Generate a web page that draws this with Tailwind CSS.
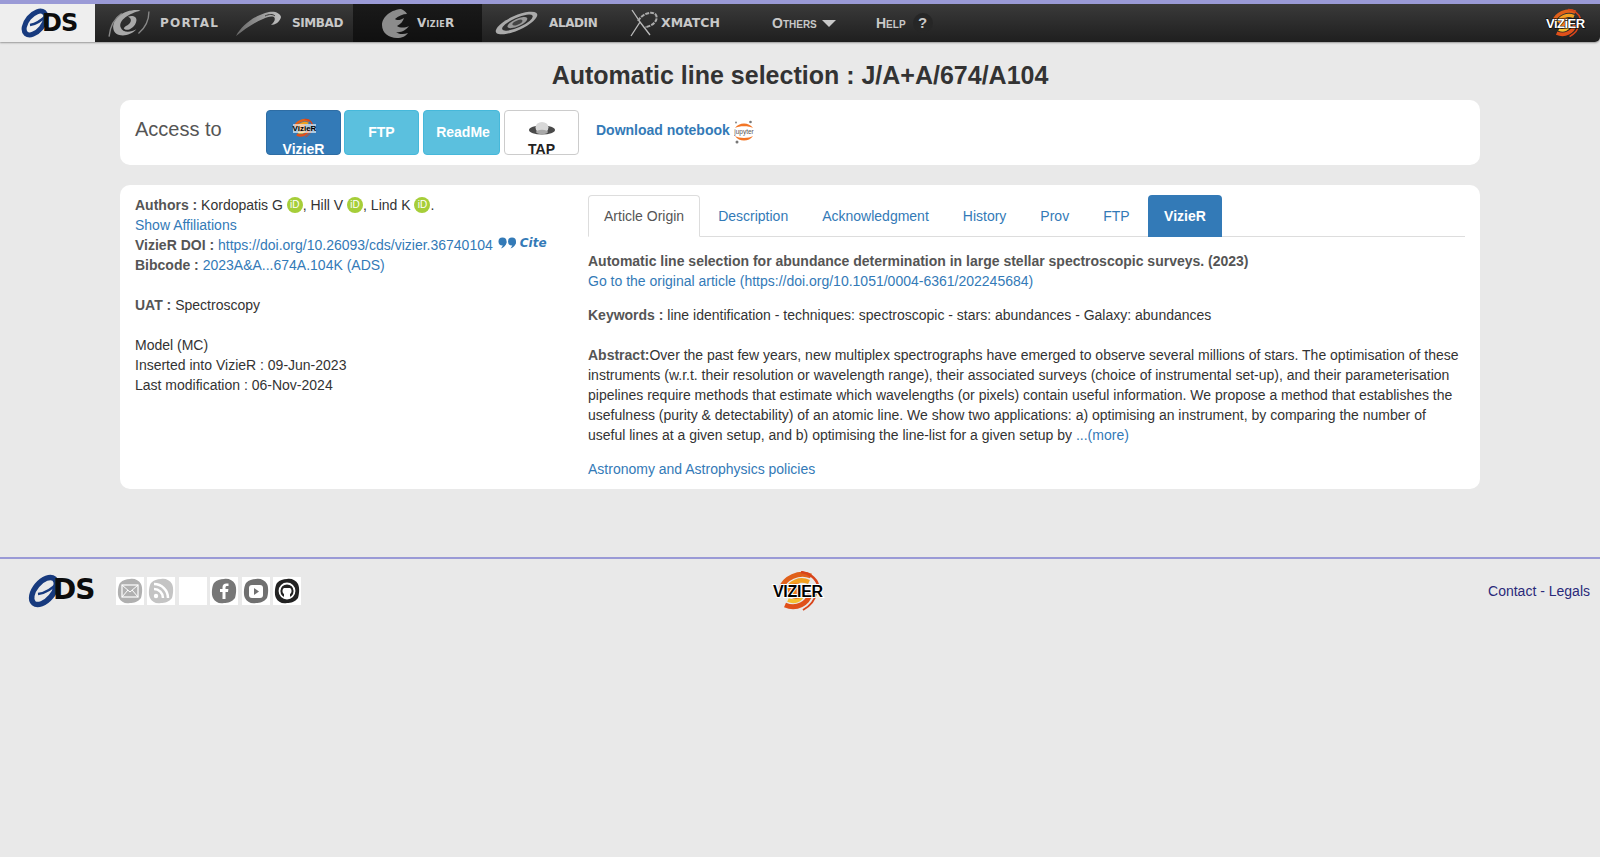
<!DOCTYPE html>
<html lang="en">
<head>
<meta charset="utf-8">
<title>J/A+A/674/A104</title>
<script src="https://cdn.jsdelivr.net/npm/@tailwindcss/browser@4"></script>
</head>
<body class="bg-[#e9e9e9] font-['Liberation_Sans',sans-serif] text-[14px] leading-[20px] text-[#333] min-h-[857px]">
<svg width="0" height="0" class="absolute">
  <defs>
    <symbol id="flame" viewBox="0 0 50 40">
      <path d="M8 18C11 7 26 0 38 5" fill="none" stroke="#e0601a" stroke-width="5"/>
      <path d="M14 19C17 11 27 7 36 11" fill="none" stroke="#f2a020" stroke-width="4.500"/>
      <path d="M28 1C36 2 43 7 45 14" fill="none" stroke="#d8441a" stroke-width="2.500"/>
      <path d="M37 23C35 32 24 39 12 34" fill="none" stroke="#e0501a" stroke-width="5"/>
      <path d="M30 23C28 29 22 32 15 29" fill="none" stroke="#f5c030" stroke-width="4"/>
      <path d="M43 22C42 30 37 35 30 39" fill="none" stroke="#d8441a" stroke-width="2"/>
      <circle cx="23" cy="20" r="8" fill="#ee7a1c"/>
    </symbol>
    <symbol id="blob" viewBox="0 0 26 26">
      <path d="M13 1C17 0 22 2 24 6C26 10 25 17 24 20C21 24 17 25 13 25C8 26 4 24 2 20C0 16 1 8 3 5C6 2 9 1 13 1Z"/>
    </symbol>
  </defs>
</svg>

<nav class="h-[42px] border-t-4 border-[#9a9ad6] bg-gradient-to-b from-[#3a3a3a] to-[#1f1f1f] rounded-br-[5px] shadow-[0_1px_2px_rgba(0,0,0,0.35)] flex items-stretch text-[#c8c8c8]">
  <a class="w-[95px] bg-[#eeeeee] flex items-center pl-[20px] shrink-0">
    <span class="relative block w-[58px] h-[30px]">
      <svg class="absolute left-0 top-0" width="40" height="30" viewBox="0 0 40 30"><ellipse cx="15" cy="15" rx="14" ry="8" transform="rotate(-50 15 15)" fill="none" stroke="#173a7e" stroke-width="5"/><path d="M10 17C17 16 22 12 27 7" fill="none" stroke="#173a7e" stroke-width="2.500"/></svg>
      <span class="absolute left-[22px] top-[3px] text-[24px] leading-[24px] font-bold text-[#0c0c0c] tracking-[-1px] font-['DejaVu_Sans',sans-serif]">DS</span>
    </span>
  </a>
  <a class="w-[258px] shrink-0 flex items-center pl-[13px]">
    <svg width="42" height="32" viewBox="0 0 40 30"><g fill="#a8a8a8"><path d="M31 3C17 1 4 10 5 20C6 29 20 29 27 21C22 24 14 25 12 19C10 12 20 6 31 3Z"/><path d="M15 20C18 24 26 19 27 13C28 9 23 7 19 9C22 10 23 13 20 16C18 18 16 18 15 20Z"/></g><path d="M1 28C2 18 7 10 13 6M39 4C39 14 35 20 29 25" fill="none" stroke="#888" stroke-width="1.300"/></svg>
    <span class="ml-[10px] w-[58px] text-[12px] font-bold tracking-[1.2px] font-['DejaVu_Sans',sans-serif]">PORTAL</span>
    <svg class="ml-[17px]" width="47" height="28" viewBox="0 0 47 28"><defs><linearGradient id="cm" x1="0" x2="1"><stop offset="0" stop-color="#666"/><stop offset="1" stop-color="#c0c0c0"/></linearGradient></defs><path d="M1 27C7 16 20 6 34 3C40 2 45 4 46 8C45 13 40 16 36 16C39 13 41 10 39 8C36 7 32 8 28 10C18 14 9 21 1 27Z" fill="url(#cm)"/><path d="M30 7C34 5 38 5 40 7" fill="none" stroke="#333" stroke-width="1"/></svg>
    <span class="ml-[10px] text-[12px] font-bold tracking-[-0.4px] font-['DejaVu_Sans',sans-serif]">SIMBAD</span>
  </a>
  <a class="w-[129px] shrink-0 bg-gradient-to-b from-[#1a1a1a] to-[#101010] flex items-center pl-[28px]">
    <svg width="29" height="32" viewBox="0 0 29 32"><path d="M22 2C10 2 1 10 1 18C1 26 8 31 16 31C21 31 25 29 27 26C22 28 17 27 15 25C20 26 25 23 28 19C24 21 19 21 16 19C20 17 22 14 23 11C20 13 16 14 14 12C17 9 22 7 26 7C25 5 23 3 20 2Z" fill="#8c8c8c"/></svg>
    <span class="ml-[7px] text-[12px] font-bold tracking-[0.3px] font-['DejaVu_Sans',sans-serif] [font-variant:small-caps]">VizieR</span>
  </a>
  <a class="flex items-center pl-[12px] shrink-0 w-[148px]">
    <svg width="45" height="26" viewBox="0 0 46 26"><g transform="rotate(-24 23 13)"><ellipse cx="23" cy="13" rx="23" ry="7.500" fill="#aaa"/><ellipse cx="24" cy="13" rx="17" ry="5" fill="#303030"/><ellipse cx="24" cy="13" rx="11" ry="3.800" fill="#999"/><ellipse cx="24" cy="13" rx="5.500" ry="2" fill="#444"/></g></svg>
    <span class="ml-[10px] text-[12px] font-bold tracking-[-0.4px] font-['DejaVu_Sans',sans-serif]">ALADIN</span>
  </a>
  <a class="flex items-center shrink-0 w-[142px]">
    <svg width="28" height="28" viewBox="0 0 28 28"><path d="M2 1L10 13L1 27M10 13L20 26" fill="none" stroke="#bbb" stroke-width="1.300"/><path d="M8 12C12 5 22 1 26 6C29 12 21 18 15 18" fill="none" stroke="#aaa" stroke-width="2" stroke-dasharray="4 1"/></svg>
    <span class="ml-[3px] text-[12.500px] font-bold font-['DejaVu_Sans',sans-serif]">XMATCH</span>
  </a>
  <a class="flex items-center shrink-0 w-[104px] font-bold text-[14px] [font-variant:small-caps]">
    <span>Others</span>
    <span class="ml-[5px] w-0 h-0 border-x-[7px] border-x-transparent border-t-[7px] border-t-[#c8c8c8]"></span>
  </a>
  <a class="flex items-center shrink-0 font-bold text-[14px] [font-variant:small-caps]">
    <span>Help</span>
    <span class="ml-[6px] w-[20px] h-[20px] rounded-full bg-[#262626] flex items-center justify-center text-[15px] translate-x-[1px] [font-variant:normal]">?</span>
  </a>
  <a class="ml-auto mr-[16px] relative w-[38px] self-center h-[32px] block">
    <svg class="absolute left-[2px] top-0" width="36" height="32" viewBox="0 0 50 40"><use href="#flame"/></svg>
    <span class="absolute left-0 top-[10px] text-[13px] leading-[13px] font-bold text-white [paint-order:stroke] [-webkit-text-stroke:1px_#000] tracking-[-0.5px]">ViZiER</span>
  </a>
</nav>

<div class="h-[58px] pt-[8px] flex items-center justify-center">
  <h1 class="text-[25px] leading-[28px] font-bold">Automatic line selection : J/A+A/674/A104</h1>
</div>

<section class="mx-[120px] h-[65px] bg-white rounded-[10px] flex items-center">
  <div class="w-[146px] pl-[15px] text-[20px] leading-[24px] text-[#555] shrink-0 -mt-[7px]">Access to</div>
  <a class="w-[75px] h-[45px] rounded-[4px] bg-[#337ab7] border border-[#2e6da4] flex flex-col items-center text-white font-bold leading-[16px] pt-[6px]">
    <span class="relative block w-[24px] h-[24px] shrink-0 -translate-x-[1px]">
      <svg class="absolute left-0 top-0" width="24" height="22" viewBox="0 0 50 40"><use href="#flame"/></svg>
      <span class="absolute left-[2px] top-[7px] text-[8px] leading-[9px] bg-white/60 font-bold text-black">VizieR</span>
    </span>
    <span>VizieR</span>
  </a>
  <a class="ml-[3px] w-[75px] h-[45px] rounded-[4px] bg-[#5bc0de] border border-[#46b8da] flex items-center justify-center text-white font-bold pb-[2px]">FTP</a>
  <a class="ml-[4px] w-[77px] h-[45px] rounded-[4px] bg-[#5bc0de] border border-[#46b8da] flex items-center justify-center text-white font-bold pb-[2px] pl-[3px]">ReadMe</a>
  <a class="ml-[4px] w-[75px] h-[45px] rounded-[4px] bg-white border border-[#ccc] flex flex-col items-center text-[#222] font-bold leading-[16px] pt-[10px]">
    <svg class="shrink-0" width="26" height="16" viewBox="0 0 26 16"><ellipse cx="13" cy="9" rx="13" ry="4.500" fill="#4a4a4a"/><ellipse cx="13" cy="6.500" rx="6.500" ry="5.500" fill="#d8d8d8"/><ellipse cx="13" cy="11" rx="6" ry="2.200" fill="#a8a8a8"/></svg>
    <span class="mt-[4px]">TAP</span>
  </a>
  <a class="ml-[17px] text-[#337ab7] font-bold -mt-[5px]">Download notebook</a>
  <svg class="ml-[4px] -mt-[2px]" width="20" height="24" viewBox="0 0 20 24">
    <path d="M1 8C5 2 15 2 19 8C15 5.500 5 5.500 1 8Z" fill="#f37626"/>
    <path d="M1 16C5 22 15 22 19 16C15 18.500 5 18.500 1 16Z" fill="#f37626"/>
    <circle cx="16.500" cy="2" r="1.300" fill="#777"/><circle cx="2" cy="2.500" r="1" fill="#888"/><circle cx="3" cy="22" r="1.500" fill="#777"/>
    <text x="10" y="14" text-anchor="middle" font-size="6.500" fill="#555">jupyter</text>
  </svg>
</section>

<section class="mx-[120px] mt-[20px] h-[304px] bg-white rounded-[10px] flex pt-[10px] pb-[10px]">
  <div class="w-[468px] shrink-0 pl-[15px]">
    <div class="flex items-center h-[20px]"><b class="text-[#555]">Authors :</b>&nbsp;Kordopatis G&nbsp;<span class="w-[16px] h-[16px] rounded-full bg-[#a6ce39] text-white text-[10px] leading-[16px] text-center">iD</span>, Hill V&nbsp;<span class="w-[16px] h-[16px] rounded-full bg-[#a6ce39] text-white text-[10px] leading-[16px] text-center">iD</span>, Lind K&nbsp;<span class="w-[16px] h-[16px] rounded-full bg-[#a6ce39] text-white text-[10px] leading-[16px] text-center">iD</span>.</div>
    <div><a class="text-[#337ab7]">Show Affiliations</a></div>
    <div class="flex items-center h-[20px]"><b class="text-[#555]">VizieR DOI :</b>&nbsp;<a class="text-[#337ab7]">https://doi.org/10.26093/cds/vizier.36740104</a>
      <a class="ml-[5px] flex items-center text-[#337ab7] -mt-[5px]">
        <svg width="20" height="12" viewBox="0 0 20 12"><g fill="#337ab7"><circle cx="4.500" cy="4.500" r="4"/><path d="M8.500 4.500C8.500 8 6 10.500 3 11.500C4.500 9.500 5 8 5 7Z"/><circle cx="14" cy="4.500" r="4"/><path d="M18 4.500C18 8 15.500 10.500 12.500 11.500C14 9.500 14.500 8 14.500 7Z"/></g></svg>
        <b class="ml-[2px] italic text-[12px] leading-[12px] font-['DejaVu_Sans',sans-serif]">Cite</b>
      </a>
    </div>
    <div><b class="text-[#555]">Bibcode :</b> <a class="text-[#337ab7]">2023A&amp;A...674A.104K (ADS)</a></div>
    <div class="mt-[20px]"><b class="text-[#555]">UAT :</b> Spectroscopy</div>
    <div class="mt-[20px]">Model (MC)</div>
    <div>Inserted into VizieR : 09-Jun-2023</div>
    <div>Last modification : 06-Nov-2024</div>
  </div>
  <div class="flex-1 pr-[15px] min-w-0">
    <div class="h-[42px] border-b border-[#ddd] flex">
      <a class="h-[42px] px-[15px] border border-[#ddd] border-b-white rounded-t-[4px] text-[#555] bg-white flex items-center mr-[2px]">Article Origin</a>
      <a class="h-[41px] px-[16px] flex items-center mr-[2px] text-[#337ab7]">Description</a>
      <a class="h-[41px] px-[16px] flex items-center mr-[2px] text-[#337ab7]">Acknowledgment</a>
      <a class="h-[41px] px-[16px] flex items-center mr-[2px] text-[#337ab7]">History</a>
      <a class="h-[41px] px-[16px] flex items-center mr-[2px] text-[#337ab7]">Prov</a>
      <a class="h-[41px] px-[16px] flex items-center mr-[2px] text-[#337ab7]">FTP</a>
      <a class="h-[42px] px-[16.500px] rounded-t-[4px] bg-[#337ab7] text-white font-bold flex items-center">VizieR</a>
    </div>
    <div class="mt-[14px] font-bold text-[#555]">Automatic line selection for abundance determination in large stellar spectroscopic surveys. (2023)</div>
    <div><a class="text-[#337ab7]">Go to the original article (https://doi.org/10.1051/0004-6361/202245684)</a></div>
    <div class="mt-[14px]"><b class="text-[#555]">Keywords :</b> line identification - techniques: spectroscopic - stars: abundances - Galaxy: abundances</div>
    <p class="mt-[20px]"><b class="text-[#555]">Abstract:</b>Over the past few years, new multiplex spectrographs have emerged to observe several millions of stars. The optimisation of these instruments (w.r.t. their resolution or wavelength range), their associated surveys (choice of instrumental set-up), and their parameterisation pipelines require methods that estimate which wavelengths (or pixels) contain useful information. We propose a method that establishes the usefulness (purity &amp; detectability) of an atomic line. We show two applications: a) optimising an instrument, by comparing the number of useful lines at a given setup, and b) optimising the line-list for a given setup by <a class="text-[#337ab7]">...(more)</a></p>
    <div class="mt-[14px]"><a class="text-[#337ab7]">Astronomy and Astrophysics policies</a></div>
  </div>
</section>

<footer class="mt-[68px] border-t-2 border-[#9a9ad6] h-[66px] flex items-center relative">
  <a class="ml-[27px] relative block w-[68px] h-[36px] shrink-0">
    <svg class="absolute left-0 top-0" width="46" height="36" viewBox="0 0 46 36"><ellipse cx="17" cy="18" rx="16" ry="9" transform="rotate(-50 17 18)" fill="none" stroke="#173a7e" stroke-width="5.500"/><path d="M11 21C19 20 26 15 31 9" fill="none" stroke="#173a7e" stroke-width="2.500"/></svg>
    <span class="absolute left-[26px] top-[3px] text-[28px] leading-[28px] font-bold text-[#0c0c0c] tracking-[-1px] font-['DejaVu_Sans',sans-serif]">DS</span>
  </a>
  <div class="ml-[21px] flex gap-[3.400px]">
    <a class="w-[28px] h-[28px] bg-white flex items-center justify-center"><svg width="26" height="26" viewBox="0 0 26 26"><use href="#blob" fill="#b0b0b0"/><rect x="5" y="7" width="16" height="12" fill="none" stroke="#fff" stroke-width="1.200"/><path d="M5 7L13 14L21 7M5 19L11 12M21 19L15 12" fill="none" stroke="#fff"/></svg></a>
    <a class="w-[28px] h-[28px] bg-white flex items-center justify-center"><svg width="26" height="26" viewBox="0 0 26 26"><use href="#blob" fill="#c4c4c4"/><circle cx="8" cy="18" r="2.200" fill="#fff"/><path d="M6 11A9 9 0 0 1 15 20M6 6A14 14 0 0 1 20 20" fill="none" stroke="#fff" stroke-width="2.500"/></svg></a>
    <a class="w-[28px] h-[28px] bg-white"></a>
    <a class="w-[28px] h-[28px] bg-white flex items-center justify-center"><svg width="26" height="26" viewBox="0 0 26 26"><use href="#blob" fill="#777"/><path d="M14.500 21V14H17L17.400 11H14.500V9.500C14.500 8.600 15 8 16 8H17.500V5.500H15.500C13 5.500 11.500 7 11.500 9.200V11H9V14H11.500V21Z" fill="#fff"/></svg></a>
    <a class="w-[28px] h-[28px] bg-white flex items-center justify-center"><svg width="26" height="26" viewBox="0 0 26 26"><use href="#blob" fill="#707070"/><rect x="6" y="7" width="14" height="13" rx="3" fill="#fff"/><path d="M11 10L16 13.500L11 17Z" fill="#707070"/></svg></a>
    <a class="w-[28px] h-[28px] bg-white flex items-center justify-center"><svg width="26" height="26" viewBox="0 0 26 26"><use href="#blob" fill="#222"/><circle cx="13" cy="13" r="7.500" fill="none" stroke="#fff" stroke-width="1.800"/><path d="M10 20V16C8 15 8 11 10 10H16C18 11 18 15 16 16V20" fill="#fff"/></svg></a>
  </div>
  <a class="absolute left-[773px] top-[12px] w-[50px] h-[40px] block">
    <svg class="absolute inset-0" width="50" height="40" viewBox="0 0 50 40"><use href="#flame"/></svg>
    <span class="absolute left-0 top-[13px] text-[16px] leading-[16px] font-bold text-black tracking-[-0.3px] [paint-order:stroke] [-webkit-text-stroke:2px_#fff]">VIZIER</span>
  </a>
  <div class="ml-auto mr-[10px] text-[#2a2a7a]"><a>Contact</a> - <a>Legals</a></div>
</footer>
</body>
</html>
